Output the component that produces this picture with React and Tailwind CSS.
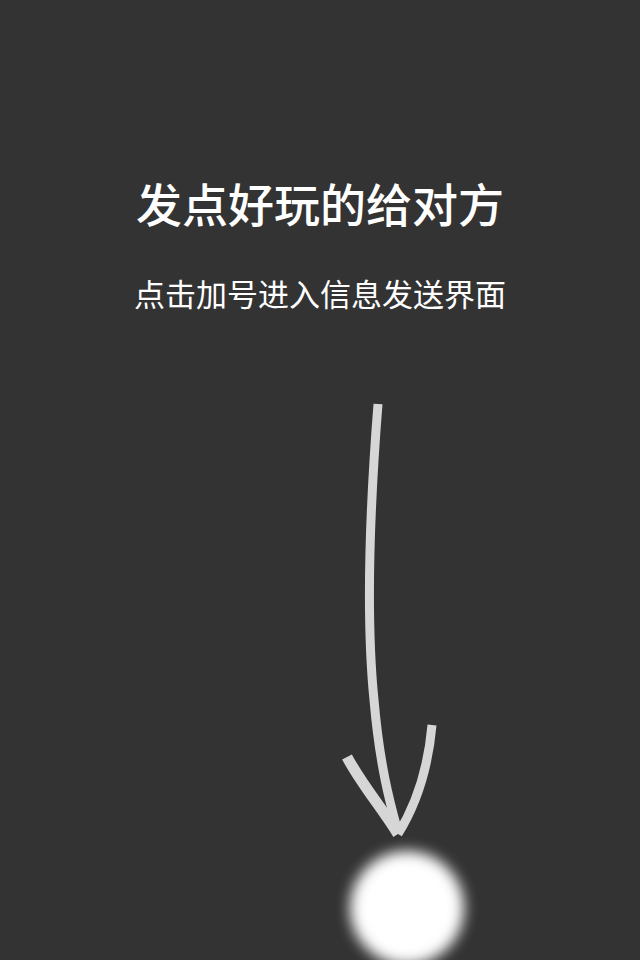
export default function App() {
  return (
    <div
      className="w-[640px] h-[960px] bg-[#333333] overflow-hidden flex flex-col items-center"
      style={{ fontFamily: '"Noto Sans CJK SC", "Noto Sans", sans-serif' }}
    >
      <h1 className="mt-[174px] text-white text-[46px] leading-[56px] font-medium">
        发点好玩的给对方
      </h1>
      <p className="mt-[43px] text-white text-[31px] leading-[40px]">
        点击加号进入信息发送界面
      </p>
      <div className="relative w-[640px] flex-1">
        <svg
          className="absolute left-0 top-0"
          width="640"
          height="650"
          viewBox="0 313 640 650"
        >
          <g fill="none" stroke="#d6d6d6" strokeWidth="9" strokeLinecap="butt" strokeLinejoin="miter">
            <path d="M378 404 C 372 480, 364 600, 374 700 C 380 770, 392 810, 398 832" />
            <path d="M347 757 C 362 785, 382 808, 398 834" strokeWidth="11" />
            <path d="M432 725 C 428 770, 416 805, 398 834" strokeWidth="9" />
          </g>
        </svg>
        <div className="absolute left-[350px] top-[538px] w-[114px] h-[114px] rounded-full bg-white blur-[7px]" />
      </div>
    </div>
  );
}
